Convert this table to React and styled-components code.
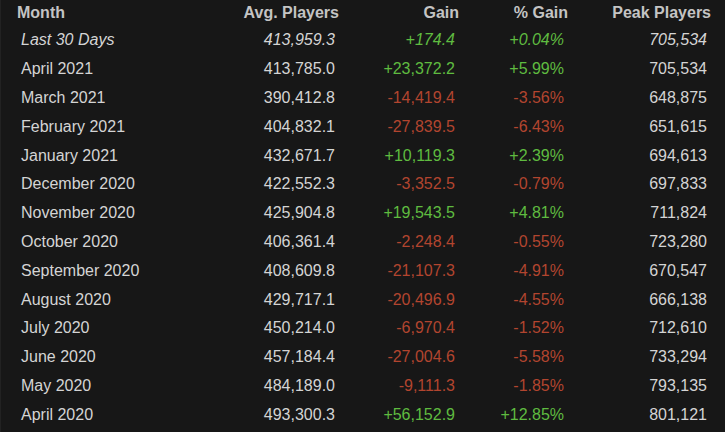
import React from "react";
import styled, { createGlobalStyle } from "styled-components";

const GlobalStyle = createGlobalStyle`
  html, body {
    margin: 0;
    padding: 0;
    background-color: #171717;
  }
  body {
    font-family: "Liberation Sans", Arial, sans-serif;
  }
`;

const Table = styled.div`
  width: 725px;
  height: 432px;
  overflow: hidden;
  background-color: #171717;
  border-left: 1px solid #222;
  box-sizing: border-box;
`;

const Row = styled.div`
  display: grid;
  grid-template-columns: 179px 163px 120px 109px 143px;
  height: ${(p) => (p.$head ? "26px" : "28.8px")};
  align-items: center;
  font-size: 16px;
  font-weight: ${(p) => (p.$head ? "bold" : "normal")};
  font-style: ${(p) => (p.$italic ? "italic" : "normal")};
  color: ${(p) => (p.$head ? "#c4c4c4" : "#d4d4d4")};
`;

const Cell = styled.div`
  text-align: ${(p) => (p.$left ? "left" : "right")};
  padding: ${(p) =>
    p.$left ? (p.$head ? "0 0 0 16px" : "0 0 0 20px") : p.$head ? "0 4px 0 0" : "0 8px 0 0"};
  color: ${(p) => (p.$tone === "up" ? "#5fbb40" : p.$tone === "down" ? "#b2452f" : "inherit")};
  white-space: nowrap;
`;

const rows = [
  ["Last 30 Days", "413,959.3", "+174.4", "+0.04%", "705,534"],
  ["April 2021", "413,785.0", "+23,372.2", "+5.99%", "705,534"],
  ["March 2021", "390,412.8", "-14,419.4", "-3.56%", "648,875"],
  ["February 2021", "404,832.1", "-27,839.5", "-6.43%", "651,615"],
  ["January 2021", "432,671.7", "+10,119.3", "+2.39%", "694,613"],
  ["December 2020", "422,552.3", "-3,352.5", "-0.79%", "697,833"],
  ["November 2020", "425,904.8", "+19,543.5", "+4.81%", "711,824"],
  ["October 2020", "406,361.4", "-2,248.4", "-0.55%", "723,280"],
  ["September 2020", "408,609.8", "-21,107.3", "-4.91%", "670,547"],
  ["August 2020", "429,717.1", "-20,496.9", "-4.55%", "666,138"],
  ["July 2020", "450,214.0", "-6,970.4", "-1.52%", "712,610"],
  ["June 2020", "457,184.4", "-27,004.6", "-5.58%", "733,294"],
  ["May 2020", "484,189.0", "-9,111.3", "-1.85%", "793,135"],
  ["April 2020", "493,300.3", "+56,152.9", "+12.85%", "801,121"],
];

const App = () => {
  return (
    <>
      <GlobalStyle />
      <Table>
        <Row $head>
          <Cell $head $left>Month</Cell>
          <Cell $head>Avg. Players</Cell>
          <Cell $head>Gain</Cell>
          <Cell $head>% Gain</Cell>
          <Cell $head>Peak Players</Cell>
        </Row>
        {rows.map((r, i) => {
          const tone = r[2].startsWith("+") ? "up" : "down";
          return (
            <Row key={r[0]} $italic={i === 0}>
              <Cell $left>{r[0]}</Cell>
              <Cell>{r[1]}</Cell>
              <Cell $tone={tone}>{r[2]}</Cell>
              <Cell $tone={tone}>{r[3]}</Cell>
              <Cell>{r[4]}</Cell>
            </Row>
          );
        })}
      </Table>
    </>
  );
};

export default App;
